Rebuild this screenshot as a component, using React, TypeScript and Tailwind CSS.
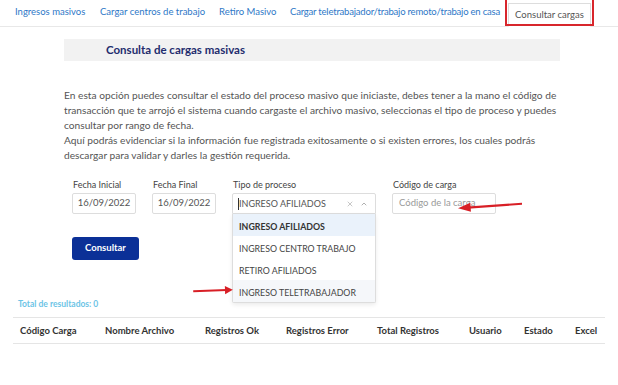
import { ChevronUp, X } from 'lucide-react'

const tabs = [
  { t: 'Ingresos masivos', w: 'w-[85px]' },
  { t: 'Cargar centros de trabajo', w: 'w-[119px]' },
  { t: 'Retiro Masivo', w: 'w-[71px]' },
  { t: 'Cargar teletrabajador/trabajo remoto/trabajo en casa', w: 'w-[218px] tracking-[-0.2px]' },
]

const opciones = ['INGRESO AFILIADOS', 'INGRESO CENTRO TRABAJO', 'RETIRO AFILIADOS', 'INGRESO TELETRABAJADOR']

const columnas = [
  { t: 'Código Carga', w: 'w-[85px]' },
  { t: 'Nombre Archivo', w: 'w-[100px]' },
  { t: 'Registros Ok', w: 'w-[81px]' },
  { t: 'Registros Error', w: 'w-[91px]' },
  { t: 'Total Registros', w: 'w-[92px]' },
  { t: 'Usuario', w: 'w-[55px]' },
  { t: 'Estado', w: 'w-[51px]' },
  { t: 'Excel', w: 'w-[30px]' },
]

function Arrow({ className, flip }: { className: string; flip?: boolean }) {
  return (
    <svg className={className} viewBox="0 0 70 12" fill="none" preserveAspectRatio="none">
      <g transform={flip ? 'translate(70 0) scale(-1 1)' : undefined}>
        <line x1="2" y1="6" x2="58" y2="6" stroke="#d81f26" strokeWidth="2.2" />
        <path d="M55 1.5 L68 6 L55 10.5 Z" fill="#d81f26" />
      </g>
    </svg>
  )
}

export default function App() {
  return (
    <div className="relative w-[618px] h-[385px] bg-white overflow-hidden text-[#555] font-['Lato',sans-serif]">
      {/* Tabs */}
      <div className="flex items-end h-[27px] border-b border-[#e8e8e8] pl-[15px] text-[9.5px] text-[#2e78c7]">
        {tabs.map((t) => (
          <span key={t.t} className={t.w + ' shrink-0 pb-[7px] whitespace-nowrap'}>
            {t.t}
          </span>
        ))}
        <span className="relative -mb-px h-[24px] w-[83px] shrink-0 flex items-center justify-center bg-white border border-[#ddd] border-b-white text-[#555] whitespace-nowrap">
          Consultar cargas
        </span>
      </div>
      {/* red highlight box */}
      <div className="absolute left-[505px] top-[-3px] w-[89px] h-[29px] border-2 border-[#d8262c]" />

      {/* Content */}
      <div className="ml-[64px] w-[496px] mt-[12px]">
        <div className="h-[22px] bg-[#f2f2f2] flex items-center pl-[42px] text-[11.5px] font-bold text-[#1f2d6e]">
          Consulta de cargas masivas
        </div>
        <p className="mt-[27px] text-[10.2px] leading-[15px] whitespace-nowrap">
          En esta opción puedes consultar el estado del proceso masivo que iniciaste, debes tener a la mano el código de
          <br />
          transacción que te arrojó el sistema cuando cargaste el archivo masivo, seleccionas el tipo de proceso y puedes
          <br />
          consultar por rango de fecha.
          <br />
          Aquí podrás evidenciar si la información fue registrada exitosamente o si existen errores, los cuales podrás
          <br />
          descargar para validar y darles la gestión requerida.
        </p>

        {/* Form */}
        <div className="flex mt-[15px] pl-[8px] text-[9px] text-[#444]">
          <div className="w-[80px]">
            <div className="h-[15px] pl-px">Fecha Inicial</div>
            <div className="w-[64px] h-[21px] border border-[#ddd] rounded-[2px] flex items-center justify-center text-[9.5px] text-[#555]">
              16/09/2022
            </div>
          </div>
          <div className="w-[80px]">
            <div className="h-[15px] pl-px">Fecha Final</div>
            <div className="w-[64px] h-[21px] border border-[#ddd] rounded-[2px] flex items-center justify-center text-[9.5px] text-[#555]">
              16/09/2022
            </div>
          </div>
          <div className="w-[160px] relative">
            <div className="h-[15px] pl-px">Tipo de proceso</div>
            <div className="w-[144px] h-[21px] border border-[#ddd] rounded-t-[2px] flex items-center pl-[5px] pr-[7px] text-[9px] text-[#555]">
              <span className="w-px h-[12px] bg-[#333]" />
              <span className="flex-1">INGRESO AFILIADOS</span>
              <X size={8} className="text-[#aaa] mr-[6px]" />
              <ChevronUp size={8} className="text-[#888]" />
            </div>
            <div className="absolute top-[36px] left-0 w-[144px] bg-white border border-[#ddd] border-t-0 rounded-b-[2px] shadow-[0_2px_4px_rgba(0,0,0,0.08)] text-[8.8px] text-[#444]">
              {opciones.map((o, i) => (
                <div
                  key={o}
                  className={
                    'h-[22px] flex items-center pl-[6px] pt-[3px] ' +
                    (i === 0 ? 'bg-[#eaf2fb] font-bold text-[#333]' : i === 3 ? 'bg-[#f5f7fa]' : '')
                  }
                >
                  {o}
                </div>
              ))}
            </div>
          </div>
          <div>
            <div className="h-[15px] pl-px">Código de carga</div>
            <div className="w-[104px] h-[21px] border border-[#ddd] rounded-[2px] flex items-center pl-[6px] text-[9.5px] text-[#999]">
              Código de la carga
            </div>
          </div>
        </div>

        <div className="pl-[8px] mt-[19px]">
          <button className="w-[67px] h-[23px] rounded-[3px] bg-[#0b3097] text-white text-[9.5px] font-bold">
            Consultar
          </button>
        </div>
      </div>

      {/* Results */}
      <div className="mt-[38px] ml-[18px] text-[8.5px] font-bold text-[#6cc4e6]">Total de resultados: 0</div>
      <div className="mx-[13px] mt-[7px] border-t border-b border-[#e5e5e5] h-[27px] flex items-center pl-[7px] text-[9.5px] font-bold text-[#333]">
        {columnas.map((c) => (
          <span key={c.t} className={c.w + ' shrink-0 whitespace-nowrap'}>
            {c.t}
          </span>
        ))}
      </div>

      {/* annotation arrows */}
      <Arrow className="absolute left-[456px] top-[200px] w-[68px] h-[12px] rotate-[-4deg]" flip />
      <Arrow className="absolute left-[192px] top-[285px] w-[42px] h-[11px] rotate-[-2deg]" />
    </div>
  )
}
